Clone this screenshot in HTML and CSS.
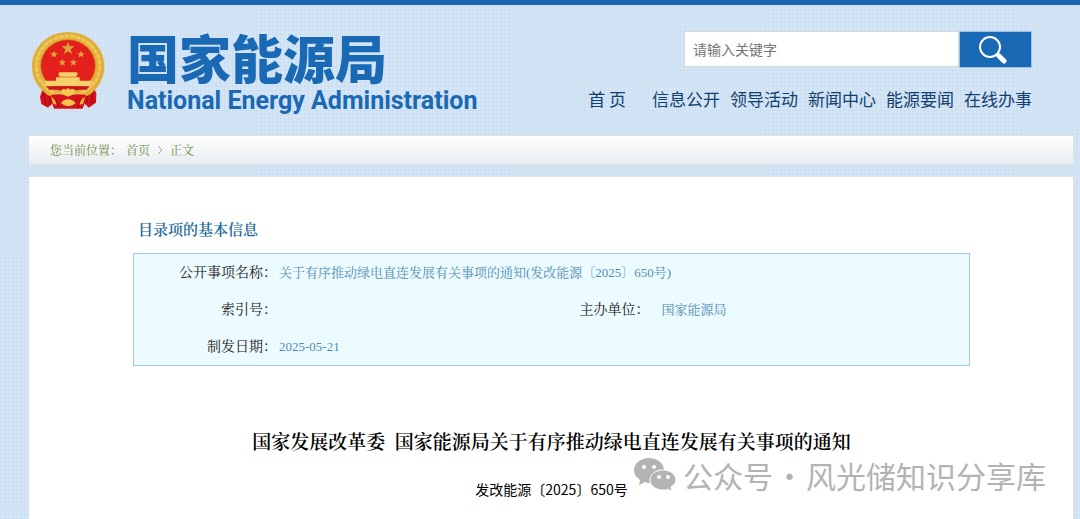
FILE: index.html
```html
<!DOCTYPE html>
<html lang="zh-CN">
<head>
<meta charset="utf-8">
<meta name="viewport" content="width=device-width, initial-scale=1">
<title>国家能源局</title>
<link rel="stylesheet" href="styles.css">
</head>
<body>
<header class="header">
  <a class="brand" href="#">
    <svg class="emblem" viewBox="30 30 228 240" aria-hidden="true">
      <path d="M72 196 L60 230 L64 252 L84 263 L96 250 L102 266 L188 266 L194 250 L206 263 L228 248 L229 220 L218 196Z" fill="#d5121b"/>
      <path d="M70 212L78 256M88 224L92 256M204 224L198 254M219 210L215 252M106 236L118 264M184 236L174 264" stroke="#a90b14" stroke-width="4" fill="none"/>
      <path d="M144 36C206 36 253 80 253 140C253 174 236 202 212 222C196 232 180 236 168 234L122 234C104 236 86 230 72 216C50 196 36 172 36 140C36 80 84 36 144 36Z" fill="#e2b03a"/>
      <ellipse cx="144" cy="138" rx="95" ry="90" fill="none" stroke="#eec75c" stroke-width="9" stroke-dasharray="14 3"/>
      <ellipse cx="144" cy="138" rx="103" ry="97" fill="none" stroke="#d9a430" stroke-width="2" stroke-dasharray="7 4"/>
      <ellipse cx="144" cy="137" rx="82" ry="78" fill="#e4201c" stroke="#c98b20" stroke-width="2"/>
      <path d="M144 66l5 13 14 0-11 9 4 14-12-8-12 8 4-14-11-9 14 0z" fill="#e0a63c"/>
      <g fill="#dfa23a">
        <path id="star" d="M102 92l3 7 8 0-6 5 2 8-7-4-7 4 2-8-6-5 8 0z"/>
        <use href="#star" x="81"/>
        <use href="#star" x="25" y="25"/>
        <use href="#star" x="58" y="25"/>
      </g>
      <path d="M118 157h52l4 8h-4v5h-52v-5h-4zM108 172h71v10h-71zM73 182h143l-5 17h-133z" fill="#f6d06a"/>
      <path d="M78 199h131l-10 10h-34l-10-5h-22l-10 5h-35z" fill="#c9171b"/>
      <path d="M122 214l8-8 8 3 6-5 7 5 8-3 9 8-6 6 6 8-14 1-10 5-12-5-13 0 8-8z" fill="#f3c94e"/>
      <path d="M92 226q30-8 52 4q22-12 55-4l-9 12q-20-4-46 5q-24-9-46-5z" fill="#d5121b"/>
      <path d="M123 250q8-13 22-12q14 1 22 12q-9 7-22 9q-13-2-22-9z" fill="#f2c64e"/>
      <path d="M93 232q12 3 17 22l-10-2zM195 232q-12 3-17 22l11-2z" fill="#e9b540"/>
    </svg>
    <span class="brand-text">
      <span class="brand-cn">国家能源局</span>
      <span class="brand-en" lang="en">National Energy Administration</span>
    </span>
  </a>
  <div class="tools">
    <form class="search" role="search">
      <input class="search-input" type="text" placeholder="请输入关键字" aria-label="请输入关键字">
      <button class="search-button" type="button" aria-label="搜索">
        <svg class="search-icon" viewBox="0 0 28 28" aria-hidden="true">
          <circle cx="11" cy="11" r="10" fill="none" stroke="#fff" stroke-width="2"/>
          <path d="M18 18l3 3" stroke="#fff" stroke-width="2"/>
          <path d="M20 20l5 5" stroke="#fff" stroke-width="5" stroke-linecap="round"/>
        </svg>
      </button>
    </form>
    <nav class="nav">
      <a class="nav-home" href="#">首 页</a>
      <a href="#">信息公开</a>
      <a href="#">领导活动</a>
      <a href="#">新闻中心</a>
      <a href="#">能源要闻</a>
      <a href="#">在线办事</a>
    </nav>
  </div>
</header>
<nav class="crumbs" aria-label="您当前位置">
  <span>您当前位置：</span>
  <a href="#">首页</a>
  <svg class="crumb-arrow" viewBox="0 0 6 10" aria-hidden="true"><path d="M1 1l4 4-4 4" fill="none" stroke="#9aa98a"/></svg>
  <span>正文</span>
</nav>
<main class="panel">
  <section class="info">
    <h2 class="info-title">目录项的基本信息</h2>
    <dl class="info-box">
      <div class="field field-wide"><dt>公开事项名称：</dt><dd>关于有序推动绿电直连发展有关事项的通知(发改能源〔2025〕650号)</dd></div>
      <div class="field"><dt>索引号：</dt><dd></dd></div>
      <div class="field field-unit"><dt>主办单位：</dt><dd>国家能源局</dd></div>
      <div class="field field-wide"><dt>制发日期：</dt><dd>2025-05-21</dd></div>
    </dl>
  </section>
  <article class="article">
    <h1 class="article-title">国家发展改革委&ensp;国家能源局关于有序推动绿电直连发展有关事项的通知</h1>
    <p class="article-number">发改能源〔2025〕650号</p>
  </article>
  <div class="watermark">
    <svg class="wechat" viewBox="0 0 42 34" aria-hidden="true">
      <path d="M15 0C7 0 0 5 0 12c0 4 2 7 6 10l-1 5 6-3c2 1 4 1 6 1 0-8 6-13 13-13C30 5 23 0 15 0z" fill="#b3b3b3"/>
      <path d="M29 12c-7 0-13 4-13 10s6 10 13 10c2 0 4 0 5-1l4 3-1-5c3-2 5-4 5-7 0-6-6-10-13-10z" fill="#b3b3b3" stroke="#fff"/>
      <g fill="#fff"><circle cx="10" cy="9" r="2"/><circle cx="20" cy="9" r="2"/><circle cx="25" cy="19" r="2"/><circle cx="34" cy="19" r="2"/></g>
    </svg>
    <span>公众号</span><span class="dot">·</span><span>风光储知识分享库</span>
  </div>
</main>
</body>
</html>
```
FILE: styles.css
```css
* { box-sizing: border-box; }
html { min-height: 100%; display: flex; }
body {
  flex: 1;
  min-width: 0;
  margin: 0;
  display: flex;
  flex-direction: column;
  border-top: 5px solid #1c65b2;
  background-color: #d4e5f5;
  background-image:
    repeating-linear-gradient(0deg, rgba(160, 190, 222, .12) 0 1px, transparent 1px 4px),
    repeating-linear-gradient(90deg, rgba(160, 190, 222, .12) 0 1px, transparent 1px 4px);
  font-family: "Liberation Serif", "Noto Serif CJK SC", "Noto Sans CJK SC", serif;
}
a { color: inherit; text-decoration: none; }

.header {
  display: flex;
  justify-content: space-between;
  padding: 21px 48px 0 30px;
  height: 130px;
}
.brand { display: flex; gap: 21px; color: #1a69b5; }
.emblem { width: 76px; height: 80px; margin-top: 4px; }
.brand-text { display: flex; flex-direction: column; white-space: nowrap; }
.brand-cn { font: 900 52px/62px "Noto Sans CJK SC", sans-serif; }
.brand-en { font: 700 25px/26px Roboto, sans-serif; }

.tools {
  display: flex;
  flex-direction: column;
  align-items: flex-end;
  gap: 18px;
  padding-top: 5px;
}
.search { display: flex; margin: 0; }
.search-input {
  width: 275px;
  height: 36px;
  padding: 0 8px;
  border: 1px solid #d3d8dc;
  background: #fff;
  font: 14px "Noto Sans CJK SC", sans-serif;
}
.search-input::placeholder { color: #757575; opacity: 1; }
.search-button {
  width: 73px;
  height: 37px;
  padding: 0 0 0 19px;
  border: 1px solid #9fc3e6;
  background: #1a69b5;
  display: flex;
  align-items: center;
}
.search-icon { width: 28px; height: 28px; }
.nav {
  display: flex;
  gap: 10px;
  color: #123f70;
  font: 17px/26px "Noto Sans CJK SC", sans-serif;
  white-space: nowrap;
}
.nav-home { margin-right: 16px; }

.crumbs, .panel { margin: 0 6px 0 29px; }
.crumbs {
  display: flex;
  align-items: center;
  height: 30px;
  padding-left: 21px;
  border: 1px solid #dce2e8;
  border-left: 0;
  background: linear-gradient(#fff, #e9edf1);
  color: #6f8f45;
  font-size: 12px;
}
.crumbs a { margin-left: 4px; }
.crumb-arrow { width: 6px; height: 10px; margin: 0 7px; }

.panel {
  position: relative;
  flex: 1;
  margin-top: 11px;
  padding: 42px 103px 18px 104px;
  border: 1px solid #dce2e8;
  border-width: 1px 1px 0 0;
  background: #fff;
}
.info-title {
  margin: 0 0 12px;
  padding-left: 5px;
  color: #246b98;
  font-size: 15px;
  font-weight: 600;
  line-height: 22px;
}
.info-box {
  display: grid;
  grid-template-columns: 1fr 1fr;
  margin: 0;
  border: 1px solid #a3c9ea;
  background: #ecfbff;
  line-height: 37px;
}
.field { display: grid; grid-template-columns: 143px 1fr; column-gap: 2px; }
.field-wide { grid-column: 1 / -1; }
.field-unit { grid-template-columns: 98px 1fr; column-gap: 12px; }
.field dt { color: #222; font-size: 14px; text-align: right; }
.field dd { margin: 0; color: #4f8cb5; font-size: 13px; }

.article { margin-top: 63px; text-align: center; color: #000; }
.article-title { margin: 0; font-size: 19px; font-weight: 600; line-height: 28px; }
.article-number {
  margin: 22px 0 0;
  font: 14px/20px "Noto Sans CJK SC", sans-serif;
}
.watermark {
  position: absolute;
  right: 27px;
  bottom: 24px;
  display: flex;
  align-items: center;
  color: #b3b3b3;
  font: 30px/40px "Noto Sans CJK SC", sans-serif;
}
.wechat { width: 42px; height: 34px; margin-right: 7px; }
.dot { width: 33px; text-align: center; }
```
